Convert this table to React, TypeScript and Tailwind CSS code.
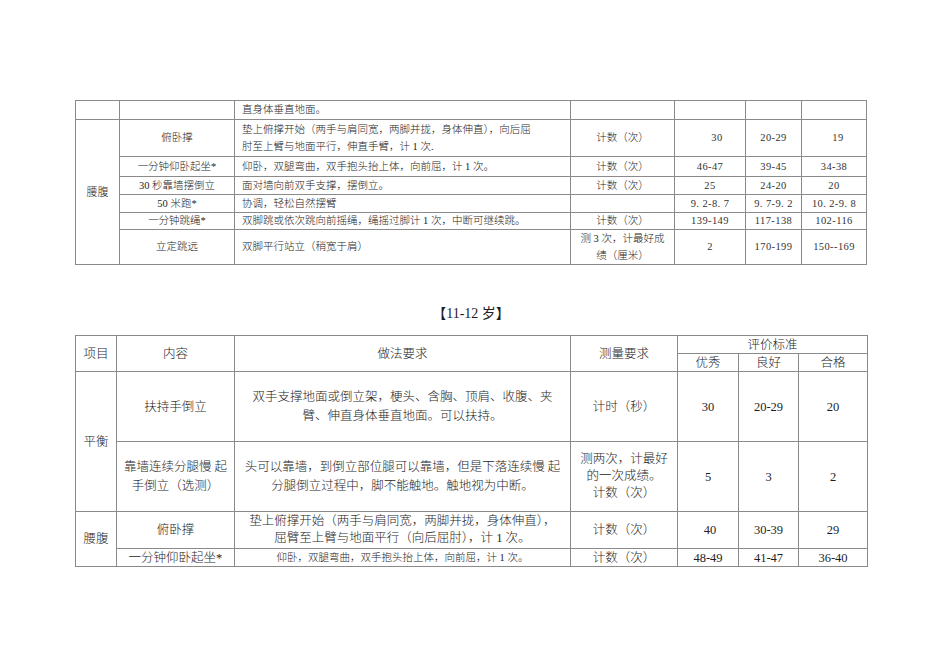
import React from "react";

const cell = "border border-[#8a8a8a] p-0 align-middle";
const num1 = "font-['Liberation_Serif','Noto_Sans_CJK_SC',serif] text-[10.5px] tracking-[0.4px] text-[#333]";

export default function App() {
  return (
    <div className="w-[950px] h-[672px] bg-white text-[#1e1e1e] font-['Liberation_Serif','Noto_Sans_CJK_SC',serif] font-light pl-[75px] pt-[100px]">
      {/* Table 1 */}
      <table className="border-collapse table-fixed w-[791px] text-[10.5px] leading-[16px]">
        <colgroup>
          <col className="w-[44px]" />
          <col className="w-[115px]" />
          <col className="w-[336px]" />
          <col className="w-[104px]" />
          <col className="w-[71px]" />
          <col className="w-[56px]" />
          <col className="w-[65px]" />
        </colgroup>
        <tbody>
          <tr className="h-[19px]">
            <td className={cell}></td>
            <td className={cell}></td>
            <td className={`${cell} pl-[7px]`}>直身体垂直地面。</td>
            <td className={cell}></td>
            <td className={cell}></td>
            <td className={cell}></td>
            <td className={cell}></td>
          </tr>
          <tr className="h-[37px]">
            <td className={`${cell} text-center text-[11px]`} rowSpan={6}>腰腹</td>
            <td className={`${cell} text-center`}>俯卧撑</td>
            <td className={`${cell} pl-[7px] leading-[17px]`}>
              垫上俯撑开始（两手与肩同宽，两脚并拢，身体伸直），向后屈
              <br />
              肘至上臂与地面平行，伸直手臂，计 1 次.
            </td>
            <td className={`${cell} text-center`}>计数（次）</td>
            <td className={`${cell} text-center pl-[14px] ${num1}`}>30</td>
            <td className={`${cell} text-center ${num1}`}>20-29</td>
            <td className={`${cell} text-center pl-[8px] ${num1}`}>19</td>
          </tr>
          <tr className="h-[20px]">
            <td className={`${cell} text-center`}>一分钟仰卧起坐*</td>
            <td className={`${cell} pl-[7px]`}>仰卧，双腿弯曲，双手抱头抬上体，向前屈，计 1 次。</td>
            <td className={`${cell} text-center`}>计数（次）</td>
            <td className={`${cell} text-center ${num1}`}>46-47</td>
            <td className={`${cell} text-center ${num1}`}>39-45</td>
            <td className={`${cell} text-center ${num1}`}>34-38</td>
          </tr>
          <tr className="h-[18px]">
            <td className={`${cell} text-center`}>30 秒靠墙摆倒立</td>
            <td className={`${cell} pl-[7px]`}>面对墙向前双手支撑，摆倒立。</td>
            <td className={`${cell} text-center`}>计数（次）</td>
            <td className={`${cell} text-center ${num1}`}>25</td>
            <td className={`${cell} text-center ${num1}`}>24-20</td>
            <td className={`${cell} text-center ${num1}`}>20</td>
          </tr>
          <tr className="h-[18px]">
            <td className={`${cell} text-center`}>50 米跑*</td>
            <td className={`${cell} pl-[7px]`}>协调，轻松自然摆臂</td>
            <td className={cell}></td>
            <td className={`${cell} text-center ${num1}`}>9. 2-8. 7</td>
            <td className={`${cell} text-center ${num1}`}>9. 7-9. 2</td>
            <td className={`${cell} text-center ${num1}`}>10. 2-9. 8</td>
          </tr>
          <tr className="h-[17px]">
            <td className={`${cell} text-center`}>一分钟跳绳*</td>
            <td className={`${cell} pl-[7px]`}>双脚跳或依次跳向前摇绳，绳摇过脚计 1 次，中断可继续跳。</td>
            <td className={`${cell} text-center`}>计数（次）</td>
            <td className={`${cell} text-center ${num1}`}>139-149</td>
            <td className={`${cell} text-center ${num1}`}>117-138</td>
            <td className={`${cell} text-center ${num1}`}>102-116</td>
          </tr>
          <tr className="h-[34px]">
            <td className={`${cell} text-center`}>立定跳远</td>
            <td className={`${cell} pl-[7px]`}>双脚平行站立（稍宽于肩）</td>
            <td className={`${cell} text-center leading-[17px]`}>
              测 3 次，计最好成
              <br />
              绩（厘米）
            </td>
            <td className={`${cell} text-center ${num1}`}>2</td>
            <td className={`${cell} text-center ${num1}`}>170-199</td>
            <td className={`${cell} text-center ${num1}`}>150--169</td>
          </tr>
        </tbody>
      </table>

      {/* Title */}
      <div className="w-[792px] mt-[38px] h-[20px] flex items-center justify-center text-[14px] font-normal">
        <span>【11-12 岁】</span>
      </div>

      {/* Table 2 */}
      <table className="mt-[12px] border-collapse table-fixed w-[792px] text-[12.5px] leading-[18px]">
        <colgroup>
          <col className="w-[41px]" />
          <col className="w-[118px]" />
          <col className="w-[336px]" />
          <col className="w-[107px]" />
          <col className="w-[61px]" />
          <col className="w-[60px]" />
          <col className="w-[69px]" />
        </colgroup>
        <tbody>
          <tr className="h-[18px]">
            <td className={`${cell} text-center`} rowSpan={2}>项目</td>
            <td className={`${cell} text-center`} rowSpan={2}>内容</td>
            <td className={`${cell} text-center`} rowSpan={2}>做法要求</td>
            <td className={`${cell} text-center`} rowSpan={2}>测量要求</td>
            <td className={`${cell} text-center leading-[16px]`} colSpan={3}>评价标准</td>
          </tr>
          <tr className="h-[18px]">
            <td className={`${cell} text-center leading-[16px]`}>优秀</td>
            <td className={`${cell} text-center leading-[16px]`}>良好</td>
            <td className={`${cell} text-center leading-[16px]`}>合格</td>
          </tr>
          <tr className="h-[70px]">
            <td className={`${cell} text-center`} rowSpan={2}>平衡</td>
            <td className={`${cell} text-center`}>扶持手倒立</td>
            <td className={`${cell} text-center leading-[19px] px-[4px]`}>
              双手支撑地面或倒立架，梗头、含胸、顶肩、收腹、夹
              <br />
              臂、伸直身体垂直地面。可以扶持。
            </td>
            <td className={`${cell} text-center`}>计时（秒）</td>
            <td className={`${cell} text-center`}>30</td>
            <td className={`${cell} text-center`}>20-29</td>
            <td className={`${cell} text-center`}>20</td>
          </tr>
          <tr className="h-[70px]">
            <td className={`${cell} text-center leading-[19px]`}>
              靠墙连续分腿慢 起
              <br />
              手倒立（选测）
            </td>
            <td className={`${cell} text-center leading-[19px] px-[2px]`}>
              头可以靠墙，到倒立部位腿可以靠墙，但是下落连续慢 起
              <br />
              分腿倒立过程中，脚不能触地。触地视为中断。
            </td>
            <td className={`${cell} text-center leading-[17px]`}>
              测两次，计最好
              <br />
              的一次成绩。
              <br />
              计数（次）
            </td>
            <td className={`${cell} text-center`}>5</td>
            <td className={`${cell} text-center`}>3</td>
            <td className={`${cell} text-center`}>2</td>
          </tr>
          <tr className="h-[37px]">
            <td className={`${cell} text-center`} rowSpan={2}>腰腹</td>
            <td className={`${cell} text-center`}>俯卧撑</td>
            <td className={`${cell} text-center leading-[17px]`}>
              垫上俯撑开始（两手与肩同宽，两脚并拢，身体伸直），
              <br />
              屈臂至上臂与地面平行（向后屈肘），计 1 次。
            </td>
            <td className={`${cell} text-center`}>计数（次）</td>
            <td className={`${cell} text-center pl-[4px]`}>40</td>
            <td className={`${cell} text-center`}>30-39</td>
            <td className={`${cell} text-center`}>29</td>
          </tr>
          <tr className="h-[18px]">
            <td className={`${cell} text-center leading-[16px]`}>一分钟仰卧起坐*</td>
            <td className={`${cell} text-center text-[10.5px] leading-[16px]`}>仰卧，双腿弯曲，双手抱头抬上体，向前屈，计 1 次。</td>
            <td className={`${cell} text-center leading-[16px]`}>计数（次）</td>
            <td className={`${cell} text-center leading-[16px]`}>48-49</td>
            <td className={`${cell} text-center leading-[16px]`}>41-47</td>
            <td className={`${cell} text-center leading-[16px]`}>36-40</td>
          </tr>
        </tbody>
      </table>
    </div>
  );
}
